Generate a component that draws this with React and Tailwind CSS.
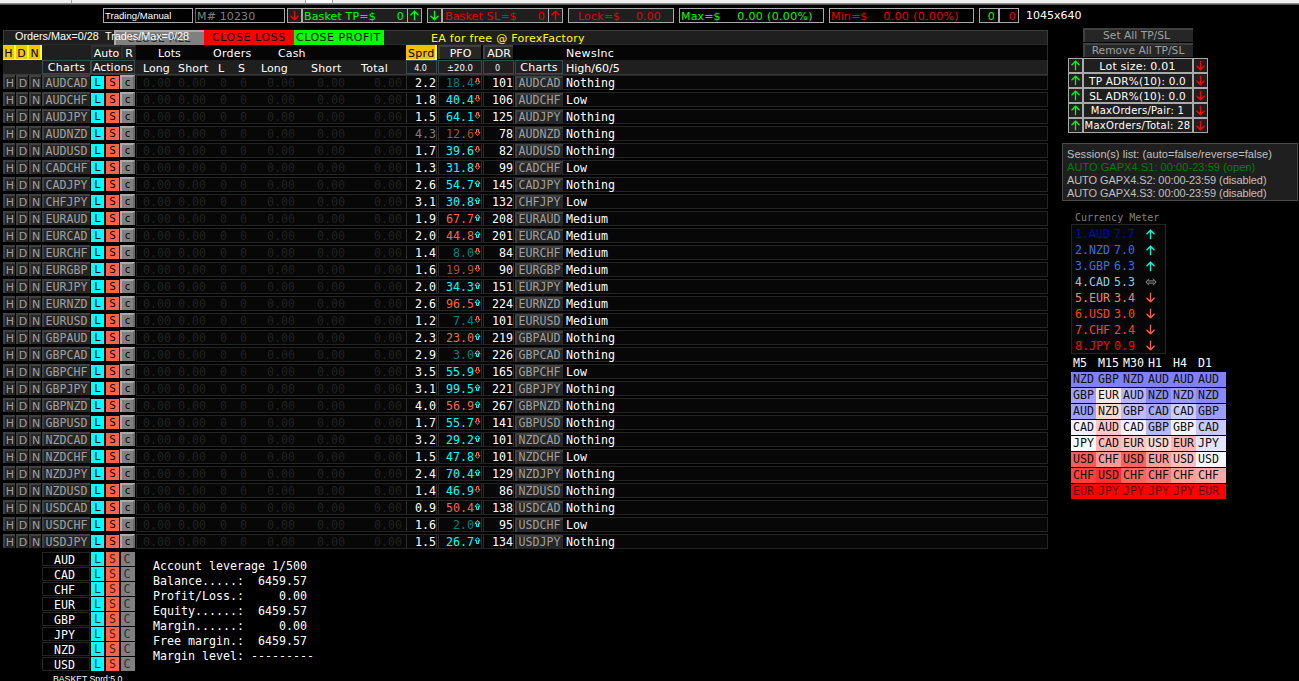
import clsx from 'clsx'

const SANS = "font-['DejaVu_Sans',sans-serif] text-[11px]"
const ARIAL = "font-['Liberation_Sans',sans-serif]"

// pair, spread, pfo, pfo color, direction, adr, news
const PAIRS = [
  ['AUDCAD', '2.2', '18.4', 'teal', 'down', 101, 'Nothing'],
  ['AUDCHF', '1.8', '40.4', 'aqua', 'down', 106, 'Low'],
  ['AUDJPY', '1.5', '64.1', 'aqua', 'down', 125, 'Nothing'],
  ['AUDNZD', '4.3', '12.6', 'sienna', 'down', 78, 'Nothing'],
  ['AUDUSD', '1.7', '39.6', 'aqua', 'down', 82, 'Nothing'],
  ['CADCHF', '1.3', '31.8', 'aqua', 'down', 99, 'Low'],
  ['CADJPY', '2.6', '54.7', 'aqua', 'up', 145, 'Nothing'],
  ['CHFJPY', '3.1', '30.8', 'aqua', 'up', 132, 'Low'],
  ['EURAUD', '1.9', '67.7', 'tomato', 'up', 208, 'Medium'],
  ['EURCAD', '2.0', '44.8', 'tomato', 'up', 201, 'Medium'],
  ['EURCHF', '1.4', '8.0', 'teal', 'down', 84, 'Medium'],
  ['EURGBP', '1.6', '19.9', 'sienna', 'down', 90, 'Medium'],
  ['EURJPY', '2.0', '34.3', 'aqua', 'up', 151, 'Medium'],
  ['EURNZD', '2.6', '96.5', 'tomato', 'up', 224, 'Medium'],
  ['EURUSD', '1.2', '7.4', 'teal', 'down', 101, 'Medium'],
  ['GBPAUD', '2.3', '23.0', 'tomato', 'up', 219, 'Nothing'],
  ['GBPCAD', '2.9', '3.0', 'teal', 'up', 226, 'Nothing'],
  ['GBPCHF', '3.5', '55.9', 'aqua', 'down', 165, 'Low'],
  ['GBPJPY', '3.1', '99.5', 'aqua', 'up', 221, 'Nothing'],
  ['GBPNZD', '4.0', '56.9', 'tomato', 'up', 267, 'Nothing'],
  ['GBPUSD', '1.7', '55.7', 'aqua', 'down', 141, 'Nothing'],
  ['NZDCAD', '3.2', '29.2', 'aqua', 'up', 101, 'Nothing'],
  ['NZDCHF', '1.5', '47.8', 'aqua', 'down', 101, 'Low'],
  ['NZDJPY', '2.4', '70.4', 'aqua', 'up', 129, 'Nothing'],
  ['NZDUSD', '1.4', '46.9', 'aqua', 'down', 86, 'Nothing'],
  ['USDCAD', '0.9', '50.4', 'tomato', 'up', 138, 'Nothing'],
  ['USDCHF', '1.6', '2.0', 'teal', 'up', 95, 'Low'],
  ['USDJPY', '1.5', '26.7', 'aqua', 'up', 134, 'Nothing'],
]

const PFO_COLORS = {
  teal: 'text-[#008080]',
  aqua: 'text-[#00ffff]',
  sienna: 'text-[#a0522d]',
  tomato: 'text-[#ff6347]',
}

const CURRENCIES = ['AUD', 'CAD', 'CHF', 'EUR', 'GBP', 'JPY', 'NZD', 'USD']

const ACCOUNT = [
  'Account leverage 1/500',
  'Balance.....:  6459.57',
  'Profit/Loss.:     0.00',
  'Equity......:  6459.57',
  'Margin......:     0.00',
  'Free margin.:  6459.57',
  'Margin level: ---------',
]

const SETTINGS = [
  ['Lot size: 0.01', 'text-[11px] tracking-[0.2px]'],
  ['TP ADR%(10): 0.0', 'text-[10.5px] tracking-[0.2px]'],
  ['SL ADR%(10): 0.0', 'text-[10.5px] tracking-[0.2px]'],
  ['MaxOrders/Pair: 1', 'text-[10px] tracking-[0.25px]'],
  ['MaxOrders/Total: 28', 'text-[10px] tracking-[0.3px]'],
]

const METER = [
  ['1.AUD', '7.7', 'up', 'text-[#0000cd]'],
  ['2.NZD', '7.0', 'up', 'text-[#4169e1]'],
  ['3.GBP', '6.3', 'up', 'text-[#4169e1]'],
  ['4.CAD', '5.3', 'flat', 'text-[#87ceeb]'],
  ['5.EUR', '3.4', 'down', 'text-[#fa8072]'],
  ['6.USD', '3.0', 'down', 'text-[#ff4500]'],
  ['7.CHF', '2.4', 'down', 'text-[#ff4500]'],
  ['8.JPY', '0.9', 'down', 'text-[#ff0000]'],
]

const HEAT = [
  [['NZD', 'bg-[#8080ff]'], ['GBP', 'bg-[#8080ff]'], ['NZD', 'bg-[#8080ff]'], ['AUD', 'bg-[#8080ff]'], ['AUD', 'bg-[#8080ff]'], ['AUD', 'bg-[#8080ff]']],
  [['GBP', 'bg-[#a0a0ff]'], ['EUR', 'bg-[#ffe8e0]'], ['AUD', 'bg-[#b4b4ff]'], ['NZD', 'bg-[#8888ff]'], ['NZD', 'bg-[#9c9cff]'], ['NZD', 'bg-[#8888ff]']],
  [['AUD', 'bg-[#a0a0ff]'], ['NZD', 'bg-[#ffd8cc]'], ['GBP', 'bg-[#bcbcff]'], ['CAD', 'bg-[#a8a8ff]'], ['CAD', 'bg-[#c8d0ff]'], ['GBP', 'bg-[#9c9cff]']],
  [['CAD', 'bg-[#f0f0ff]'], ['AUD', 'bg-[#ffc8c8]'], ['CAD', 'bg-[#f4f4ff]'], ['GBP', 'bg-[#b8b8ff]'], ['GBP', 'bg-[#f4f4ff]'], ['CAD', 'bg-[#c8c8ff]']],
  [['JPY', 'bg-[#f8fcff]'], ['CAD', 'bg-[#ffb8b8]'], ['EUR', 'bg-[#ffc8c8]'], ['USD', 'bg-[#ffd8d8]'], ['EUR', 'bg-[#ffb8b8]'], ['JPY', 'bg-[#e4e4ff]']],
  [['USD', 'bg-[#ff5858]'], ['CHF', 'bg-[#ff9898]'], ['USD', 'bg-[#ff6060]'], ['EUR', 'bg-[#ff9c9c]'], ['USD', 'bg-[#ffc0c0]'], ['USD', 'bg-[#f8f8ff]']],
  [['CHF', 'bg-[#ff4040]'], ['USD', 'bg-[#ff3030]'], ['CHF', 'bg-[#ff6464]'], ['CHF', 'bg-[#ff7474]'], ['CHF', 'bg-[#ff9c9c]'], ['CHF', 'bg-[#ffa8a8]']],
  [['EUR', 'bg-[#ff0000]'], ['JPY', 'bg-[#ff0000]'], ['JPY', 'bg-[#ff0000]'], ['JPY', 'bg-[#ff0000]'], ['JPY', 'bg-[#ff0000]'], ['EUR', 'bg-[#ff0000]']],
]

function Arrow({ dir, className }) {
  return (
    <svg
      width="11"
      height="11"
      viewBox="0 0 11 11"
      fill="none"
      stroke="currentColor"
      strokeWidth="1.3"
      className={clsx('shrink-0', dir === 'down' && 'rotate-180', className)}
    >
      <path d="M5.5 10.2V1.2M1.5 5.2l4-4 4 4" />
    </svg>
  )
}

// small outlined arrow next to the PFO value
function TinyArrow({ dir }) {
  return (
    <svg
      width="7"
      height="7"
      viewBox="0 0 7 7"
      fill="none"
      stroke="currentColor"
      className={clsx('shrink-0 mb-[5px]', dir === 'down' ? 'rotate-180 text-[#ff6347]' : 'text-[#00ffff]')}
    >
      <path d="M3.5 .6L1 3.5H2.5V6.5H4.5V3.5H6Z" />
    </svg>
  )
}

function FlatArrow() {
  return (
    <svg width="12" height="8" viewBox="0 0 12 8" fill="none" stroke="#909090" strokeWidth="1">
      <path d="M4 .7L.9 4 4 7.3M8 .7L11.1 4 8 7.3M2.5 2.9h7M2.5 5.1h7" />
    </svg>
  )
}

function Bevel({ className, children }) {
  return (
    <div className={clsx('flex h-[14px] shrink-0 items-center justify-center overflow-hidden border-t-2 border-l-2 border-[#404040] bg-[#262626] text-[#a0a0a0]', className)}>
      {children}
    </div>
  )
}

function Box({ className, children }) {
  return (
    <div className={clsx('flex h-[15px] shrink-0 items-center overflow-hidden border border-[#a9a9a9] bg-[#1f1f1f]', className)}>
      {children}
    </div>
  )
}

function Toolbar() {
  return (
    <div className={clsx('flex h-[15px] pl-[103px] tracking-[0.15px]', SANS)}>
      <Box className={clsx('w-[90px] bg-black pl-[1px] text-[9.6px] tracking-normal text-white', ARIAL)}>Trading/Manual</Box>
      <Box className="ml-[2px] w-[90px] border-l-[#606060] bg-black pl-[1px] pt-px text-[#808080]">M# 10230</Box>
      <Box className="ml-[2px] w-[15px] justify-center text-[#ff0000]"><Arrow dir="down" /></Box>
      <Box className="w-[106px] justify-between pl-[1px] pr-[3px] pt-px text-[#00ff00]"><span>Basket TP=$</span><span>0</span></Box>
      <Box className="-ml-px w-[15px] justify-center text-[#00ff00]"><Arrow dir="up" /></Box>
      <Box className="ml-[5px] w-[15px] justify-center text-[#00ff00]"><Arrow dir="down" /></Box>
      <Box className="w-[107px] justify-between pl-[2px] pr-[3px] pt-px text-[#ee0000]"><span>Basket SL=$</span><span>0</span></Box>
      <Box className="-ml-px w-[15px] justify-center text-[#ee0000]"><Arrow dir="up" /></Box>
      <Box className="ml-[5px] w-[106px] justify-between pl-[9px] pr-[12px] pt-px text-[#c81414]"><span>Lock=$</span><span>0.00</span></Box>
      <Box className="ml-[5px] w-[145px] justify-between bg-black pl-[1px] pr-[10px] pt-px text-[#00ff00]"><span>Max=$</span><span className="tracking-[0.35px]">0.00 (0.00%)</span></Box>
      <Box className="ml-[5px] w-[145px] justify-between bg-black pl-[1px] pr-[14px] pt-px text-[#ee0000]"><span>Min=$</span><span className="tracking-[0.35px]">0.00 (0.00%)</span></Box>
      <Box className="ml-[5px] w-[20px] justify-end bg-black pr-[3px] pt-px text-[#00ff00]">0</Box>
      <Box className="w-[20px] justify-end bg-black pr-[2px] pt-px text-[#ee0000]">0</Box>
      <span className="ml-[7px] leading-[16px] tracking-normal text-white">1045x640</span>
    </div>
  )
}

function TableHeader() {
  return (
    <div className={clsx('text-white', SANS)}>
      <div className="relative flex h-[15px] border border-[#3a3a3a] border-b-[#2a2a2a] bg-[#1f1f1f] text-black">
        <div className="ml-[110px] -mt-px h-[15px] w-[90px] border-t-2 border-l-2 border-[#a9a9a9] bg-[#808080] pl-[11px] leading-[13px] tracking-[0.5px] text-[#2a2a2a]">CLOSE ALL</div>
        <div className="-mt-px h-[15px] w-[90px] bg-[#ff0000] pl-[8px] leading-[16px] tracking-[0.6px]">CLOSE LOSS</div>
        <div className="-mt-px h-[15px] w-[90px] bg-[#00ff00] pl-[2px] leading-[16px] tracking-[0.5px] whitespace-nowrap">CLOSE PROFIT</div>
        <span className="ml-[47px] leading-[15px] tracking-[0.28px] text-[#ffff00]">EA for free @ ForexFactory</span>
        <div className={clsx('absolute top-0 left-[11px] flex gap-[6px] text-[10.8px] leading-[11px] text-white whitespace-nowrap', ARIAL)}>
          <span className="w-[84px]">Orders/Max=0/28</span>
          <span>Trades/Max=0/28</span>
        </div>
      </div>
      <div className="flex h-[15px] bg-[#1f1f1f]">
        {['H', 'D', 'N'].map((k) => (
          <div key={k} className="h-[15px] w-[13px] border-r-2 border-b border-[#ffff33] bg-[#f0c800] text-center leading-[17px] text-black">{k}</div>
        ))}
        <Bevel className="ml-[49px] w-[29px] border-[#303030]! bg-[#222]! text-white!">Auto</Bevel>
        <Bevel className="ml-px w-[14px] border-[#303030]! bg-[#222]! text-white!">R</Bevel>
        <div className="ml-px flex h-[15px] flex-1 border-r border-[#2a2a2a] bg-[#050505] leading-[17px]">
          <span className="w-[77px] pl-[22px]">Lots</span>
          <span className="w-[65px] tracking-[0.25px]">Orders</span>
          <span className="w-[128px] tracking-[0.15px]">Cash</span>
          <div className="w-[31px] border-r-2 border-b border-[#ffff33] bg-[#f0c000] pl-[2px] leading-[18px] text-black tracking-[0.3px]">Sprd</div>
          <Bevel className="ml-px w-[43px] text-white!">PFO</Bevel>
          <Bevel className="ml-[2px] w-[30px] text-white!">ADR</Bevel>
          <span className="ml-[53px] tracking-[0.3px]">NewsInc</span>
        </div>
      </div>
      <div className="flex h-[15px] border-b border-[#3a3a3a] bg-[#1f1f1f] leading-[17px]">
        <div className="ml-[39px] w-[49px] border border-[#2f4f4f] text-center leading-[14px] tracking-[0.25px]">Charts</div>
        <div className="w-[44px] border border-[#2f4f4f] text-center leading-[14px]">Actions</div>
        <div className="flex flex-1 border-r border-[#3a3a3a]">
          <span className="w-[43px] pl-[8px]">Long</span>
          <span className="w-[40px] tracking-[0.2px]">Short</span>
          <span className="w-[20px]">L</span>
          <span className="w-[23px]">S</span>
          <span className="w-[50px]">Long</span>
          <span className="w-[50px] tracking-[0.2px]">Short</span>
          <span className="w-[45px] tracking-[0.3px]">Total</span>
          <div className="w-[31px] border border-[#2f4f4f] pr-[2px] text-center text-[8px] leading-[15px]">4.0</div>
          <div className="ml-px w-[44px] border border-[#2f4f4f] text-center text-[8.5px] leading-[15px]">±20.0</div>
          <div className="ml-px w-[31px] border border-[#2f4f4f] pr-[2px] text-center text-[8px] leading-[15px]">0</div>
          <div className="ml-px w-[48px] border border-[#2f4f4f] text-center leading-[14px] tracking-[0.25px]">Charts</div>
          <span className="ml-[3px]">High/60/5</span>
        </div>
      </div>
    </div>
  )
}

function PairRow({ row }) {
  const [pair, spread, pfo, color, dir, adr, news] = row
  return (
    <div className="mb-[2px] flex h-[15px]">
      {['H', 'D', 'N'].map((k) => (
        <Bevel key={k} className={clsx('mr-px w-[12px]', SANS)}>{k}</Bevel>
      ))}
      <Bevel className="mr-px w-[48px] pr-px pt-px">{pair}</Bevel>
      <div className="h-[13px] mt-px w-[13px] bg-[#00ffff] text-center text-[11px] leading-[14px] text-black">L</div>
      <div className="ml-[2px] h-[13px] mt-px w-[13px] bg-[#ff6347] text-center text-[11px] leading-[14px] text-black">S</div>
      <div className="ml-px h-[14px] w-[15px] border-t-2 border-l-2 border-[#a9a9a9] border-r-2 border-r-[#696969] bg-[#808080] text-center text-[10px] leading-[12px] text-black">c</div>
      <div className="ml-px flex flex-1 items-center border border-[#242424] bg-[#070707] text-white">
        <div className="flex pt-[2px] text-right text-[#222222]">
          <span className="w-[34px]">0.00</span>
          <span className="w-[35px]">0.00</span>
          <span className="w-[21px]">0</span>
          <span className="w-[20px]">0</span>
          <span className="w-[48px]">0.00</span>
          <span className="w-[50px]">0.00</span>
          <span className="w-[57px]">0.00</span>
        </div>
        <div className={clsx('ml-[4px] flex h-[13px] w-[31px] items-center justify-end border-x border-[#2c2c2c] pt-[2px]', spread > '4.2' && 'text-[#808080]')}>{spread}</div>
        <div className="ml-px flex h-[13px] w-[44px] items-center justify-end border-x border-[#2c2c2c] pt-[2px]">
          <span className={PFO_COLORS[color]}>{pfo}</span>
          <TinyArrow dir={dir} />
        </div>
        <div className="ml-px flex h-[13px] w-[31px] items-center justify-end border-x border-[#2c2c2c] pt-[2px]">{adr}</div>
        <Bevel className="ml-px w-[48px] pr-px pt-px">{pair}</Bevel>
        <span className="ml-[3px] pt-[2px]">{news}</span>
      </div>
    </div>
  )
}

function Totals() {
  return (
    <div className="flex">
      <div className="ml-[39px] pt-px">
        {CURRENCIES.map((c) => (
          <div key={c} className="mb-px flex h-[14px] gap-px leading-[15px] text-[#303030]">
            <div className="w-[48px] border border-[#242424] pr-[3px] text-center leading-[14px] text-white">{c}</div>
            <div className="w-[14px] border-r border-black bg-[#00ffff] text-center">L</div>
            <div className="w-[14px] border-r border-black bg-[#ff6347] text-center text-[#4a2018]">S</div>
            <div className="w-[14px] bg-[#808080] pr-[2px] text-center">C</div>
          </div>
        ))}
        <div className={clsx('ml-[11px] mt-[2px] text-[8.7px] leading-[13px] text-white', ARIAL)}>BASKET Sprd:5.0</div>
      </div>
      <div className="ml-[18px] pt-[8px] leading-[15px] whitespace-pre text-white">
        {ACCOUNT.map((line) => (
          <div key={line}>{line}</div>
        ))}
      </div>
    </div>
  )
}

function SidePanel() {
  return (
    <div className="w-[251px] shrink-0 pl-[14px]">
      <div className={clsx('ml-[21px] w-[110px]', SANS)}>
        <Bevel className="mb-px w-[110px] pr-[5px] pt-px text-[10.7px]">Set All TP/SL</Bevel>
        <Bevel className="mb-px w-[110px] pr-[2px] pt-px text-[10.7px]">Remove All TP/SL</Bevel>
      </div>
      <div className="ml-[6px] w-[140px]">
        {SETTINGS.map(([label, size]) => (
          <div key={label} className="flex text-white">
            <Box className="w-[15px] justify-center text-[#00ff00]"><Arrow dir="up" /></Box>
            <Box className={clsx("w-[110px] justify-center pt-px pr-px font-['DejaVu_Sans',sans-serif] whitespace-nowrap", size)}>{label}</Box>
            <Box className="w-[15px] justify-center text-[#ff0000]"><Arrow dir="down" /></Box>
          </div>
        ))}
      </div>
      <div className={clsx('mt-[10px] h-[58px] w-[236px] border border-[#4a4a4a] bg-[#1f1f1f] pt-[4px] pl-[4px] text-[11px] leading-[13px] tracking-[0.06px] text-[#c0c0c0]', ARIAL)}>
        <div>Session(s) list: (auto=false/reverse=false)</div>
        <div className="text-[#008000]">AUTO GAPX4.S1: 00:00-23:59 (open)</div>
        <div className="tracking-[-0.09px]">AUTO GAPX4.S2: 00:00-23:59 (disabled)</div>
        <div className="tracking-[-0.09px]">AUTO GAPX4.S3: 00:00-23:59 (disabled)</div>
      </div>
      <div className="mt-[10px] ml-[13px] h-[13px] text-[10px] leading-[13px] text-[#808080]">Currency Meter</div>
      <div className="ml-[9px] h-[130px] w-[95px] border border-[#242424] bg-[#070707] pl-[3px] pt-px">
        {METER.map(([name, score, dir, color]) => (
          <div key={name} className={clsx('flex h-[16px] items-center', color)}>
            <span className="w-[39px] pt-px">{name}</span>
            <span className="w-[30px] pt-px">{score}</span>
            <span className={clsx('flex w-[13px] justify-center', dir === 'down' && 'pb-[2px]')}>
              {dir === 'flat' ? <FlatArrow /> : <Arrow dir={dir} className={dir === 'up' ? 'text-[#00ffe0]' : 'text-[#ff6347]'} />}
            </span>
          </div>
        ))}
      </div>
      <div className="ml-[9px] w-[155px]">
        <div className="grid h-[18px] grid-cols-[25px_25px_25px_25px_25px_30px] pl-[2px] leading-[18px] text-white">
          {['M5', 'M15', 'M30', 'H1', 'H4', 'D1'].map((t) => <span key={t}>{t}</span>)}
        </div>
        {HEAT.map((cells, i) => (
          <div key={i} className="mb-px grid h-[15px] grid-cols-[25px_25px_25px_25px_25px_30px] leading-[15px] text-[#101010]">
            {cells.map(([name, bg], j) => (
              <span key={j} className={clsx('pl-[2px]', bg, i === 7 && 'text-[#600000]')}>{name}</span>
            ))}
          </div>
        ))}
      </div>
    </div>
  )
}

export default function App() {
  return (
    <div className="h-[681px] w-[1299px] overflow-hidden bg-black font-['DejaVu_Sans_Mono',monospace] text-[11.63px] leading-none">
      <div className="mb-[3px] flex h-[5px] border-b border-[#555] bg-[#f0f0f0]">
        <div className="w-[72px] border-r border-b border-r-[#a0a0a0] border-b-[#8a8a8a]" />
        <div className="w-[233px] border-b border-[#8a8a8a]" />
        <div className="w-[28px] border-r border-b border-l border-x-[#a0a0a0] border-b-[#8a8a8a] bg-white" />
        <div className="flex-1 border-b border-[#8a8a8a]" />
      </div>
      <Toolbar />
      <div className="flex pt-[5px]">
        <div className="w-[1048px] shrink-0 pt-[2px] pl-[3px]">
          <TableHeader />
          {PAIRS.map((row) => <PairRow key={row[0]} row={row} />)}
          <Totals />
        </div>
        <SidePanel />
      </div>
    </div>
  )
}
